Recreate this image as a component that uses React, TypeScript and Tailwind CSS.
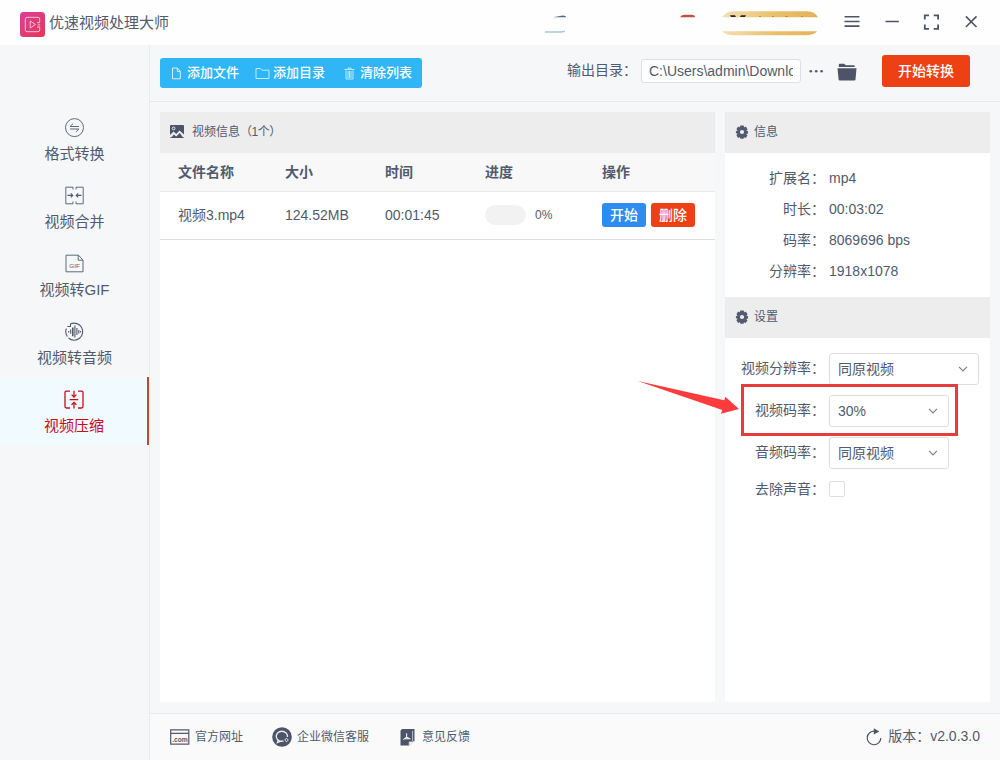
import type { ReactNode } from 'react';

interface NavItem {
  label: string;
  icon: ReactNode;
  active?: boolean;
}

const navItems: NavItem[] = [
  { label: '格式转换', icon: <ConvertIcon /> },
  { label: '视频合并', icon: <MergeIcon /> },
  { label: '视频转GIF', icon: <GifIcon /> },
  { label: '视频转音频', icon: <AudioIcon /> },
  { label: '视频压缩', icon: <CompressIcon />, active: true },
];

const infoRows = [
  { label: '扩展名：', value: 'mp4' },
  { label: '时长：', value: '00:03:02' },
  { label: '码率：', value: '8069696 bps' },
  { label: '分辨率：', value: '1918x1078' },
];

const tableGrid = 'grid grid-cols-[107px_100px_100px_117px_1fr] items-center pl-[18px]';

function ConvertIcon() {
  return (
    <svg width="20" height="20" viewBox="0 0 20 20" fill="none" stroke="currentColor" strokeWidth=".9">
      <circle cx="9.5" cy="9.6" r="9" />
      <path d="M14 8.5H5.1L8.1 5.6M5 11h8.9l-3 2.9" />
    </svg>
  );
}

function MergeIcon() {
  return (
    <svg width="20" height="20" viewBox="0 0 20 20" fill="none" stroke="currentColor" strokeWidth=".9">
      <path d="M8 3.5V1.2H.8v16.6H8v-2.3M11 3.5V1.2h7.2v16.6H11v-2.3" />
      <path d="M2.5 9.4h5.2M5.8 7.4l2 2-2 2M16.5 9.4h-5.2M13.2 7.4l-2 2 2 2" strokeWidth="1.1" />
    </svg>
  );
}

function GifIcon() {
  return (
    <svg width="20" height="20" viewBox="0 0 20 20" fill="none" stroke="currentColor" strokeWidth=".9">
      <path d="M1 1.2h12.5l4.5 5v11.6H1zM13.2 1.2v5H18" />
      <text x="9.5" y="13.6" textAnchor="middle" fontSize="6.2" fill="currentColor" stroke="none">
        GIF
      </text>
    </svg>
  );
}

function AudioIcon() {
  return (
    <svg width="20" height="20" viewBox="0 0 20 20" fill="none" stroke="currentColor" strokeWidth="1.1">
      <path d="M6 1.8A8.5 8.5 0 1 1 3.5 16" />
      <path d="M1.4 6.5a8.5 8.5 0 0 0 1 8.1M2.3 4.5h3.2V1.6" />
      <path d="M3.7 9v1.5M5.7 7.5v4.3M9.9 3.5v12M11.9 6v7M13.8 8v3.5M15.5 9v1.5" />
      <path d="M7.8 5.5v8.7" strokeWidth="1.6" />
    </svg>
  );
}

function CompressIcon() {
  return (
    <svg width="20" height="20" viewBox="0 0 20 20" fill="none" stroke="currentColor" strokeWidth="1.3">
      <path d="M6 1.2H2.4Q1 1.2 1 2.6v14q0 1.4 1.4 1.4H6M14 1.2h3.6q1.4 0 1.4 1.4v14q0 1.4-1.4 1.4H14" />
      <path d="M5.7 9.6h8.6M10 .8v5.9M10 18.6v-6" />
      <path d="M7.6 4.6 10 7l2.4-2.4M7.6 14.7l2.4-2.4 2.4 2.4" />
    </svg>
  );
}

function GearIcon() {
  return (
    <svg width="14" height="14" viewBox="0 0 14 14" fill="currentColor">
      <path
        fillRule="evenodd"
        d="M4.9 2 5.3.6h3.4L9.1 2l.5.2 1.3-.7 1.7 2.9-1 1 .1.5 1.4.4v2.2l-1.4.3-.2.6 1 1-1.8 2.7-1.3-.7-.5.2-.4 1.1H5.5L5 12.4l-.6-.2-1.3.7-1.7-2.7 1-1.1-.1-.5L.9 8.3V6.2l1.4-.4.1-.5-1-1L3.1 1.5l1.3.7zM7 4.9a2.1 2.1 0 1 0 0 4.2 2.1 2.1 0 0 0 0-4.2z"
      />
    </svg>
  );
}

function Chevron() {
  return (
    <svg width="10" height="8" viewBox="0 0 10 8" fill="none" stroke="#7b818f" strokeWidth="1.2">
      <path d="M1 1.8 5 5.8 9 1.8" />
    </svg>
  );
}

function Header() {
  return (
    <header className="flex h-[45px] shrink-0 items-center bg-[#fefefe] pl-5 pr-[21px]">
      <svg className="mt-1 shrink-0" width="25" height="25" viewBox="0 0 25 25" fill="none">
        <defs>
          <linearGradient id="logo" x1="0" y1="0" x2="1" y2="1">
            <stop offset="0" stopColor="#da3f9c" />
            <stop offset="1" stopColor="#e73653" />
          </linearGradient>
        </defs>
        <rect width="25" height="25" rx="3.5" fill="url(#logo)" />
        <path
          d="M19.7 10V7q0-1.7-1.7-1.7H7Q5.3 5.3 5.3 7v11q0 1.7 1.7 1.7h11q1.7 0 1.7-1.7v-2.8M10.2 9v7l5.2-3.5zM17 10.7h3M17.6 12.9h2.6M17 15h3"
          stroke="#fbc3d6"
          strokeWidth="1"
        />
      </svg>
      <span className="ml-1 pt-px text-[15px]">优速视频处理大师</span>

      <svg className="mb-[2px] ml-auto" width="276" height="28" viewBox="0 0 276 28">
        <defs>
          <linearGradient id="gold" x1="0" y1="0" x2="1" y2="0">
            <stop offset="0" stopColor="#f4dfb5" />
            <stop offset=".55" stopColor="#e9c06b" />
            <stop offset="1" stopColor="#e3b257" />
          </linearGradient>
        </defs>
        <path d="M9 9.2q6-.8 10-1.7 3 0 3 1.7z" fill="#506b79" />
        <path d="M1 24h16q3 0 4-1.2" stroke="#7fa9ae" strokeWidth="1" fill="none" />
        <path d="M136 9.2q1-2.5 4-2.5h8q3 0 3 2.5z" fill="#bd5242" />
        <path d="M178 9.2q4-6 11-6h74q8 0 11 6zM178 23.3q4 4 11 4h72q9 0 12-4z" fill="url(#gold)" />
        <path d="M186 7.3h5l1 1.8h-5zM197 7.3h5l-1 1.8h-5z" fill="#2c251c" />
        <path d="M215 8.5h2M228 8.5h2M241 8.5h3M257 8.5h2" stroke="#c08d3b" strokeWidth="1" />
      </svg>

      <svg className="mb-[1px] ml-[23px]" width="136" height="20" viewBox="0 0 136 20" fill="none" stroke="#4d5468" strokeWidth="1.6">
        <path d="M1.5 4.8h15M1.5 9.5h15M1.5 14.1h15M42.5 9.5h13.3" />
        <path d="M86 3.4h-4.2v4M90.7 3.4h4.4v4M81.8 12.6v4.3H86M90.7 16.9h4.4v-4.3" strokeWidth="1.8" />
        <path d="M122.9 4.4l10.6 10.6M133.5 4.4 122.9 15" />
      </svg>
    </header>
  );
}

function Sidebar() {
  return (
    <aside className="w-[150px] shrink-0 border-r border-[#e9ebee] pt-[60px]">
      {navItems.map((item) => (
        <div
          key={item.label}
          className={`flex h-[68px] flex-col items-center pl-px pt-[13px] ${
            item.active ? 'border-r-2 border-[#bd4b2f] bg-[#f0faff] text-[#c70d1e]' : 'pr-px'
          }`}
        >
          {item.icon}
          <span className="mt-1 text-[15px] leading-[23px]">{item.label}</span>
        </div>
      ))}
    </aside>
  );
}

function Toolbar() {
  return (
    <div className="flex h-[57px] shrink-0 items-center border-b border-[#e6e8eb] pl-2.5 pr-[30px]">
      <div className="flex h-[30px] w-[262px] items-center rounded-[3px] bg-[#2fb6f6] text-[13px] font-medium text-white">
        <svg className="ml-3" width="9" height="13" viewBox="0 0 9 13" fill="none" stroke="#d5f0ff">
          <path d="M.5 1h4.8l3 3.2v7.6H.5zM5.3 1v3.4h3" />
        </svg>
        <span className="ml-1.5">添加文件</span>
        <svg className="ml-4" width="15" height="13" viewBox="0 0 15 13" fill="none" stroke="#c4eaff">
          <path d="M1 1.5h4.5L7 3.2h7v8.3H1z" />
        </svg>
        <span className="ml-[3px]">添加目录</span>
        <svg className="ml-[19px]" width="11" height="13" viewBox="0 0 11 13" fill="none" stroke="#bfe8ff">
          <path d="M.5 2.5h10M4 2.2V1h3v1.2M2 3.5v8.5h7V3.5M4 4v7M5.5 4v7M7 4v7" />
        </svg>
        <span className="ml-[5px]">清除列表</span>
      </div>

      <span className="mb-1.5 ml-auto text-sm">输出目录：</span>
      <div className="mb-1 ml-1 flex h-6 w-40 items-center rounded-[3px] border border-[#dcdfe6] bg-white px-[7px] text-sm">
        <span className="overflow-hidden whitespace-nowrap">C:\Users\admin\Downloads</span>
      </div>
      <svg className="mb-1 ml-2" width="16" height="6" viewBox="0 0 16 6" fill="currentColor">
        <circle cx="1.8" cy="3.2" r="1.3" />
        <circle cx="7.2" cy="3.2" r="1.3" />
        <circle cx="12.6" cy="3.2" r="1.3" />
      </svg>
      <svg className="mb-[3px] ml-3" width="20" height="18" viewBox="0 0 20 18" fill="#4d5468">
        <path d="M1.8 4V1.6Q1.8.8 2.7.8h4.5l1.5 1.5h8q1 0 1 1V4zM.5 5.2h19l-1 11.2q-.1 1-1.2 1H2.7q-1 0-1.1-1z" />
      </svg>
      <button className="mb-1 ml-[25px] h-8 w-[88px] rounded-[3px] bg-[#ed4014] text-sm font-medium text-white">
        开始转换
      </button>
    </div>
  );
}

function FilePanel() {
  return (
    <section className="w-[555px] bg-white">
      <div className="flex h-[41px] items-center bg-[#ededed] pb-0.5 pl-2.5 text-xs">
        <svg width="14" height="13" viewBox="0 0 14 13">
          <rect width="14" height="13" rx="1" fill="#4d5468" />
          <circle cx="3.6" cy="3.4" r="1.4" fill="none" stroke="#ededed" />
          <path d="M0 12.2V10l3.6-3.4L6.2 9 9.6 5.6 14 9.6v2.6z" fill="#ededed" />
          <path d="M1 13 3.8 9.6 6.2 11.6 9.8 8l3.6 5z" fill="#4d5468" />
        </svg>
        <span className="ml-2">
          视频信息<span className="tracking-[-0.5px]">（1个）</span>
        </span>
      </div>
      <div className={`${tableGrid} h-[39px] border-b border-[#e8eaec] bg-[#f8f8f9] text-sm font-bold`}>
        <span>文件名称</span>
        <span>大小</span>
        <span>时间</span>
        <span>进度</span>
        <span>操作</span>
      </div>
      <div className={`${tableGrid} h-12 border-b border-[#dcdee2] pb-0.5 text-sm`}>
        <span>视频3.mp4</span>
        <span>124.52MB</span>
        <span>00:01:45</span>
        <div className="flex items-center gap-[9px] pt-px">
          <div className="h-5 w-[41px] rounded-full bg-[#f2f2f2]" />
          <span className="text-xs">0%</span>
        </div>
        <div className="flex gap-[5px] font-medium text-white">
          <button className="h-6 w-11 rounded-[3px] bg-[#2d8cf0]">开始</button>
          <button className="h-6 w-11 rounded-[3px] bg-[#ed4014]">删除</button>
        </div>
      </div>
    </section>
  );
}

function PanelTitle({ children }: { children: ReactNode }) {
  return (
    <div className="flex h-[41px] items-center gap-[5px] bg-[#ededed] pb-0.5 pl-2.5 text-xs">
      <GearIcon />
      <span>{children}</span>
    </div>
  );
}

function SettingRow({ label, value, wide }: { label: string; value: string; wide?: boolean }) {
  return (
    <div className="flex h-8 items-center">
      <span className="w-[100px] pb-0.5 text-right">{label}</span>
      <div
        className={`ml-1 flex h-8 items-center justify-between rounded-[3px] border border-[#dcdee2] pl-2 pr-2.5 ${
          wide ? 'w-[150px]' : 'w-[120px]'
        }`}
      >
        <span>{value}</span>
        <Chevron />
      </div>
    </div>
  );
}

function SidePanel() {
  return (
    <section className="w-[265px] bg-white text-sm">
      <PanelTitle>信息</PanelTitle>
      <div className="h-36 pt-[9px]">
        {infoRows.map((row) => (
          <div key={row.label} className="flex h-[31px] items-center">
            <span className="w-[100px] text-right">{row.label}</span>
            <span className="ml-1">{row.value}</span>
          </div>
        ))}
      </div>
      <PanelTitle>设置</PanelTitle>
      <div className="relative flex flex-col gap-2.5 pt-[15px]">
        <SettingRow label="视频分辨率：" value="同原视频" wide />
        <SettingRow label="视频码率：" value="30%" />
        <SettingRow label="音频码率：" value="同原视频" />
        <div className="flex h-5 items-center">
          <span className="w-[100px] text-right">去除声音：</span>
          <span className="ml-1 h-4 w-4 rounded-xs border border-[#dcdee2] bg-white" />
        </div>

        {/* callout around the bitrate field */}
        <div className="absolute left-4 top-[46px] h-[52px] w-[217px] border-3 border-[#e83b3e]" />
        <svg className="absolute left-[-89px] top-10" width="104" height="38" viewBox="0 0 104 38">
          <path d="M1.7 3 88.3 22.3l1-3.6 13.7 12.4L85 35.8l1.3-3.7z" fill="#fb3b3e" />
        </svg>
      </div>
    </section>
  );
}

function Footer() {
  return (
    <footer className="flex h-[47px] shrink-0 items-center border-t border-[#e8eaec] bg-[#fafafa] pl-5 pr-5 text-xs">
      <svg width="20" height="16" viewBox="0 0 20 16" fill="none" stroke="currentColor">
        <path d="M.7.9h18.1v14.3H.7zM.7 4.3h18.1" strokeWidth="1.2" />
        <text x="10" y="12.7" textAnchor="middle" fontSize="6.7" fontWeight="bold" fill="currentColor" stroke="none">
          .com
        </text>
      </svg>
      <span className="ml-[5px]">官方网址</span>
      <svg className="ml-[29px]" width="20" height="20" viewBox="0 0 20 20" fill="none">
        <circle cx="10" cy="10" r="9.8" fill="#4d5468" />
        <path d="M11.6 14A5.6 5 0 1 1 15.4 10M6 13.3 5.4 15.6l2.7-1.2" stroke="#e8eaf0" strokeWidth="1.3" />
        <path d="m14.5 11.2 1.8 1.8-1.8 1.8-1.8-1.8z" stroke="#e8eaf0" strokeWidth="1" />
      </svg>
      <span className="ml-[5px]">企业微信客服</span>
      <svg className="ml-[31px]" width="15" height="17" viewBox="0 0 15 17" fill="none">
        <path d="M2 0h12.5v12.2h-1L9.5 16.6H.5V1.5z" fill="#4d5468" />
        <path d="M12.6 1.8v10.4M9.2 16.5v-3.6h4z" stroke="#d8dbe2" strokeWidth=".8" fill="#fafafa" />
        <path d="M6.6 4.2v4L3.4 10.6M6.6 8.2l3.8 1.9M4.4 9.8h4.8" stroke="#f0f1f4" strokeWidth="1.1" />
      </svg>
      <span className="ml-[7px]">意见反馈</span>
      <svg className="ml-auto" width="16" height="18" viewBox="0 0 16 18" fill="none">
        <path d="M8.8 3.2A6.8 6.8 0 1 0 14.8 10" stroke="#4d5468" strokeWidth="1.2" />
        <path d="M7.8.3 13.3 3.4 7.8 6.5z" fill="#4d5468" />
      </svg>
      <span className="ml-1.5 pb-0.5 text-sm">版本：v2.0.3.0</span>
    </footer>
  );
}

export default function App() {
  return (
    <div
      lang="zh-CN"
      className="flex h-[760px] w-[1000px] flex-col overflow-hidden bg-[#f5f7f9] font-['Liberation_Sans','Noto_Sans_CJK_SC',sans-serif] text-[#515a6e]"
    >
      <Header />
      <div className="flex min-h-0 flex-1">
        <Sidebar />
        <div className="flex flex-1 flex-col">
          <Toolbar />
          <main className="flex min-h-0 flex-1 gap-2.5 px-2.5 pb-[11px] pt-2.5">
            <FilePanel />
            <SidePanel />
          </main>
          <Footer />
        </div>
      </div>
    </div>
  );
}
